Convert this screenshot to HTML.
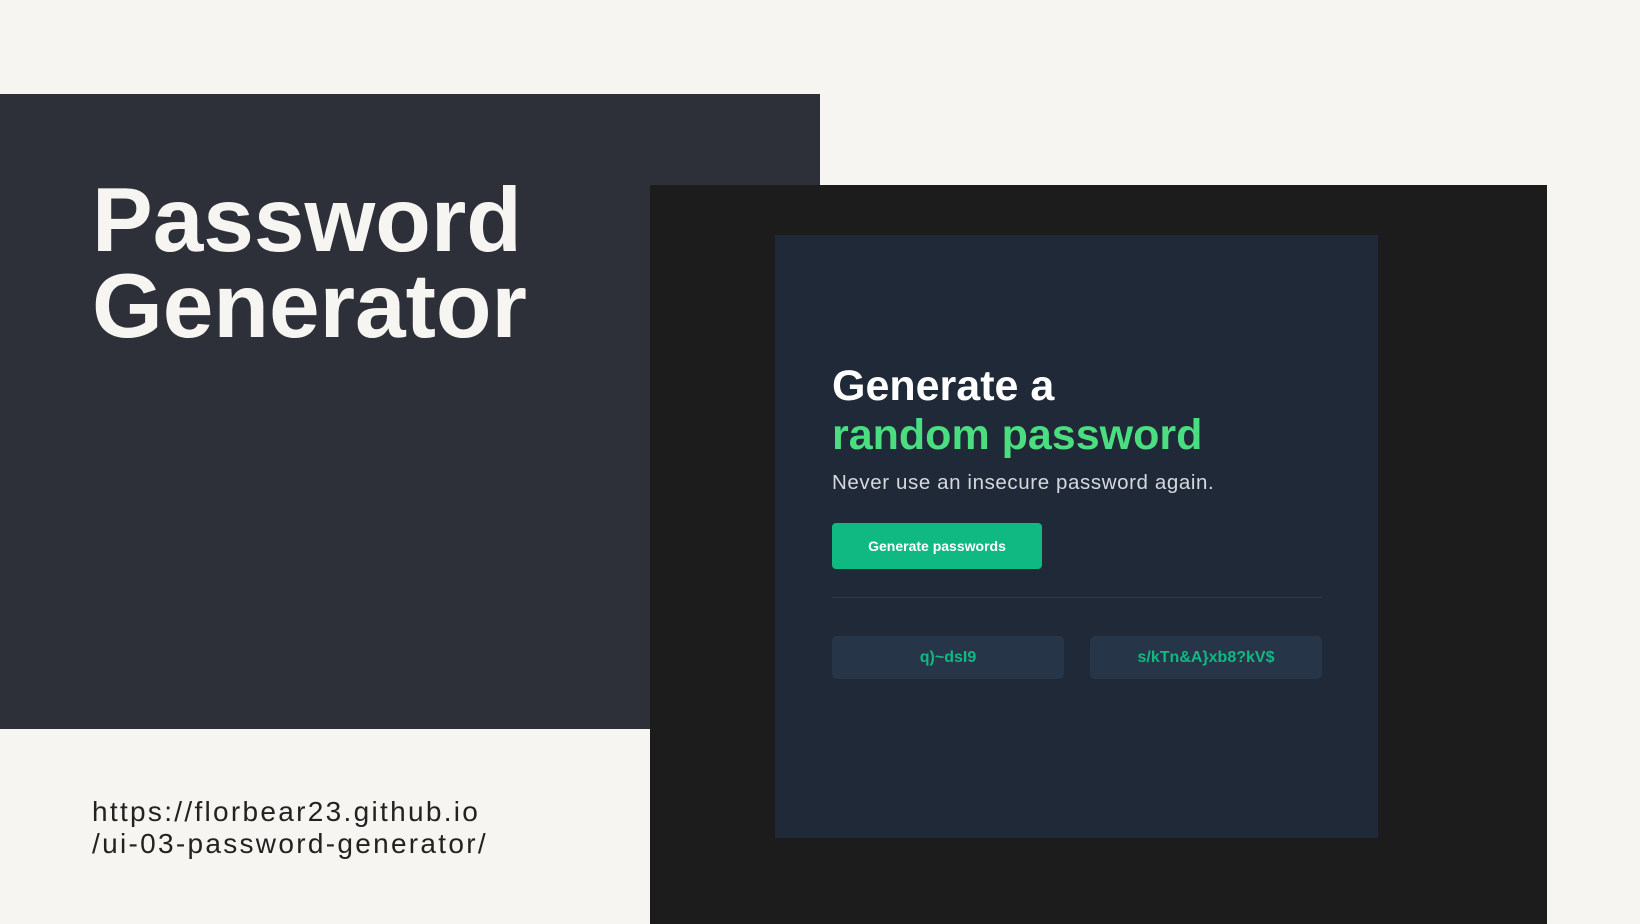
<!DOCTYPE html>
<html><head><style>
*{margin:0;padding:0;box-sizing:border-box}
body{width:1640px;height:924px;background:#f6f5f2;position:relative;overflow:hidden;font-family:"Liberation Sans",sans-serif}
.dark{position:absolute;left:0;top:94px;width:820px;height:635px;background:#2d3038}
.title{position:absolute;left:92px;top:178px;color:#f6f5f2;font-weight:bold;font-size:91px;line-height:86px;letter-spacing:0}
.url{position:absolute;left:92px;top:796px;color:#222;font-size:28px;line-height:32px;letter-spacing:2.3px}
.black{position:absolute;left:650px;top:185px;width:897px;height:739px;background:#1c1c1c}
.card{position:absolute;left:775px;top:235px;width:603px;height:603px;background:#1f2937}
.h{position:absolute;left:832px;top:362px;font-weight:bold;font-size:43px;line-height:49px;color:#fff}
.h span{color:#4ade80}
.sub{position:absolute;left:832px;top:471px;font-size:20.5px;letter-spacing:0.6px;color:#d5d9de}
.btn{position:absolute;left:832px;top:523px;width:210px;height:46px;background:#10b981;border-radius:4px;color:#fff;font-size:14px;font-weight:bold;text-align:center;line-height:46px}
.hr{position:absolute;left:832px;top:597px;width:490px;height:1px;background:#2f3b4b}
.pw{position:absolute;top:636px;width:232px;height:43px;background:#273549;border-radius:5px;color:#10b981;font-weight:bold;font-size:16px;text-align:center;line-height:43px}
</style></head><body>
<div class="dark"></div>
<div class="title">Password<br>Generator</div>
<div class="url">https://florbear23.github.io<br>/ui-03-password-generator/</div>
<div class="black"></div>
<div class="card"></div>
<div class="h">Generate a<br><span>random password</span></div>
<div class="sub">Never use an insecure password again.</div>
<div class="btn">Generate passwords</div>
<div class="hr"></div>
<div class="pw" style="left:832px">q)~dsI9</div>
<div class="pw" style="left:1090px">s/kTn&amp;A}xb8?kV$</div>
</body></html>
